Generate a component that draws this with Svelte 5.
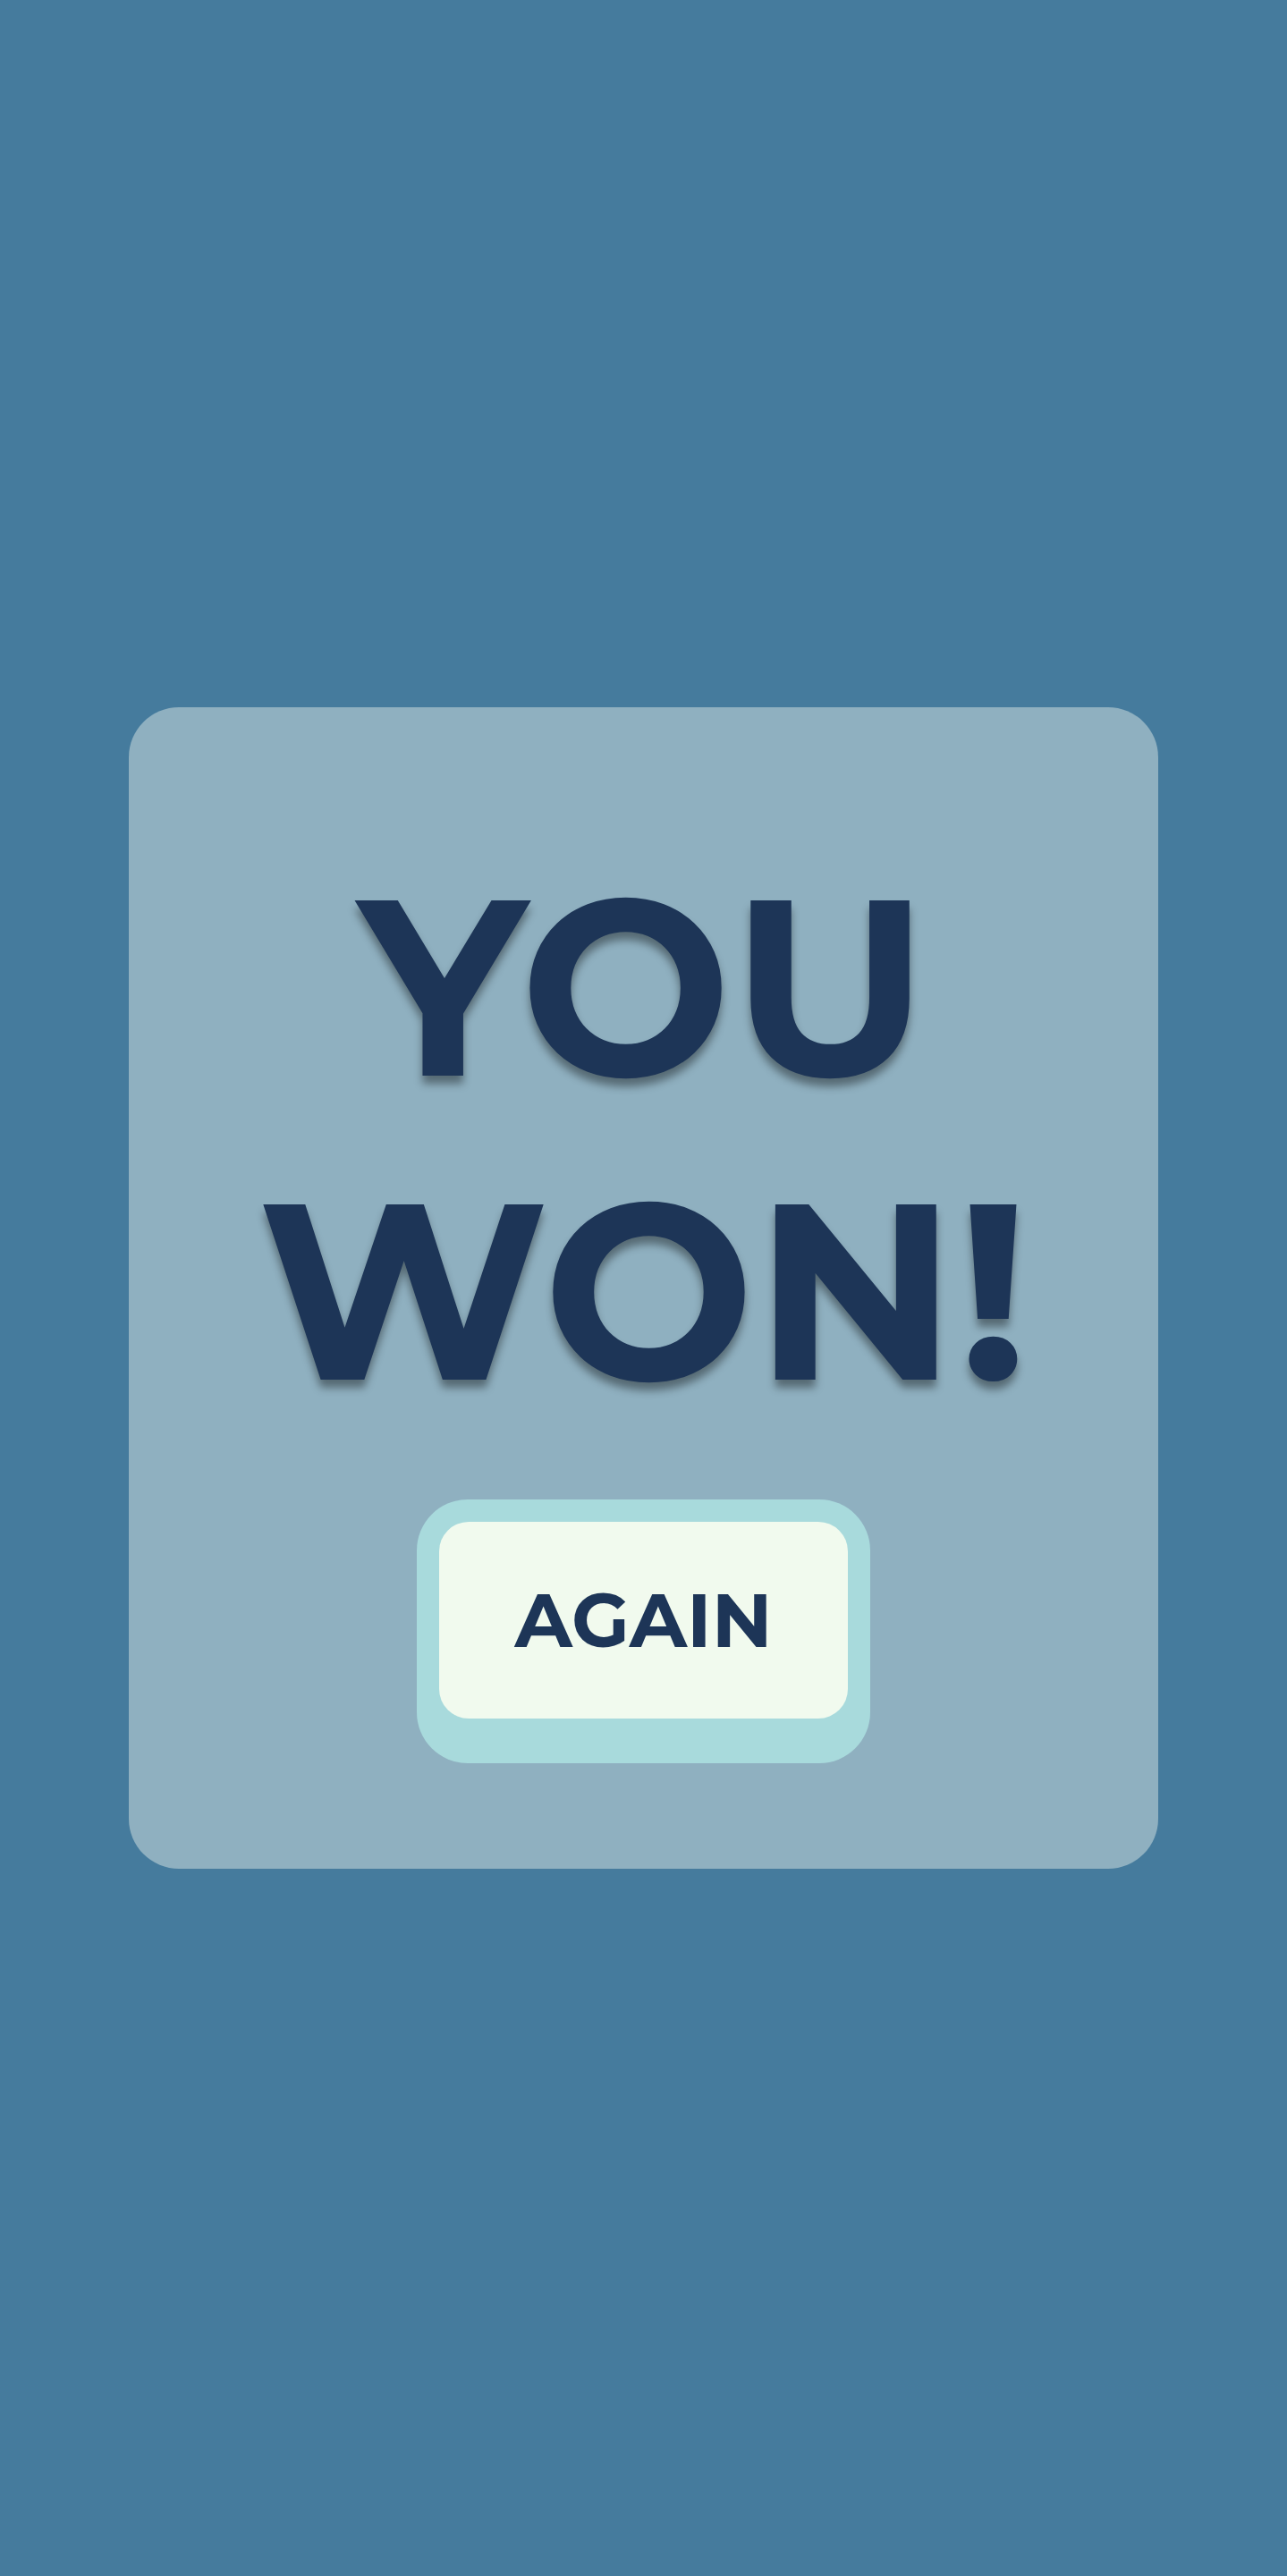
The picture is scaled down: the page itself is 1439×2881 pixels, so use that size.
<script>
  let { onagain = () => {} } = $props();
</script>

<main class="screen">
  <section class="panel" aria-labelledby="result">
    <h1 id="result" class="title">YOU<br />WON!</h1>
    <button class="again" type="button" onclick={onagain}>
      <span class="face">AGAIN</span>
    </button>
  </section>
</main>

<style>
  :global(body) {
    background: #457b9d;
  }

  .screen {
    display: flex;
    align-items: center;
    justify-content: center;
    min-height: 100vh;
    color: #1d3557;
    font-family: Montserrat, Lato, sans-serif;
  }

  .panel {
    box-sizing: border-box;
    display: flex;
    flex-direction: column;
    align-items: center;
    width: 80%;
    padding: 142px 0 118px;
    border-radius: 56px;
    background: #8fb0c0;
  }

  .title {
    margin: 0 0 64px;
    font-size: 280px;
    font-weight: 700;
    line-height: 340px;
    text-align: center;
    text-shadow: 0 9px 10px rgba(0, 0, 0, 0.4);
  }

  .again {
    padding: 25px 25px 50px;
    border: 0;
    border-radius: 57px;
    background: #a8dadc;
    color: inherit;
    font: inherit;
    cursor: pointer;
  }

  .face {
    display: block;
    padding: 0 84px;
    border-radius: 33px;
    background: #f1faee;
    font-size: 84px;
    font-weight: 700;
    line-height: 220px;
  }
</style>
